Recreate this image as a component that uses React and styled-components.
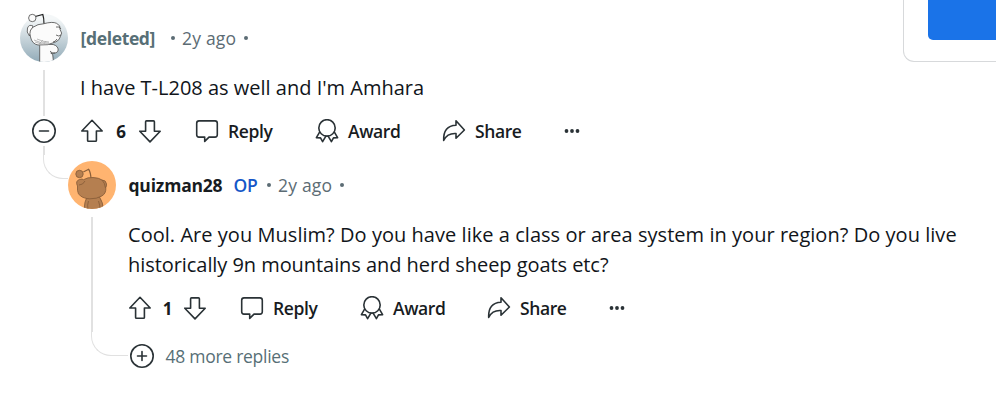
import React from 'react';
import styled, { createGlobalStyle } from 'styled-components';

const GlobalStyle = createGlobalStyle`
  * {
    box-sizing: border-box;
  }
  body {
    margin: 0;
    background: #ffffff;
    font-family: "Open Sans", "Noto Sans", sans-serif;
    overflow: hidden;
  }
`;

const Page = styled.div`
  display: flex;
  width: 996px;
  height: 404px;
  overflow: hidden;
`;

const Thread = styled.main`
  width: 903px;
  flex: none;
  padding: 14px 0 0 20px;
`;

const SidePanel = styled.aside`
  width: 93px;
  height: 62px;
  padding-left: 24px;
  border-left: 1px solid #d7d9db;
  border-bottom: 1px solid #d7d9db;
  border-bottom-left-radius: 11px;
`;

const PanelButton = styled.div`
  height: 40px;
  background: #1a73e8;
  border-bottom-left-radius: 5px;
`;

const Row = styled.div`
  display: flex;
`;

const Header = styled.header`
  display: flex;
  align-items: center;
  height: 48px;
`;

const Rail = styled.div`
  display: flex;
  flex: none;
  flex-direction: column;
  align-items: center;
  width: 48px;
  padding-top: ${(props) => props.$top || 0}px;
`;

const Line = styled.div`
  width: 2px;
  background: #e1e1e1;
  ${(props) => (props.$height ? `height: ${props.$height}px;` : 'flex: 1;')}
`;

const Elbow = styled.div`
  flex: none;
  align-self: flex-start;
  width: ${(props) => props.$width}px;
  height: ${(props) => props.$height}px;
  margin-left: 23px;
  border-left: 1px solid #e1e1e1;
  border-bottom: 1px solid #e1e1e1;
  border-bottom-left-radius: ${(props) => props.$radius}px;
`;

const ToggleSlot = styled.div`
  padding: 3px 0;
`;

const Replies = styled.section`
  padding-top: 6px;
`;

const Content = styled.div`
  padding-left: 12px;
`;

const Body = styled.p`
  margin: 11px 0 4px;
  font-size: 20px;
  line-height: 30px;
  white-space: nowrap;
  color: #11151a;
`;

const BodyLine = styled.span`
  display: block;
  letter-spacing: ${(props) => props.$spacing}px;
`;

const Name = styled.span`
  width: ${(props) => props.$width}px;
  margin-left: 12.5px;
  font-size: 17.5px;
  font-weight: 700;
  letter-spacing: ${(props) => props.$spacing}px;
  color: ${(props) => props.$color};
`;

const OpTag = styled.span`
  width: 33px;
  font-size: 17.5px;
  font-weight: 600;
  letter-spacing: -0.2px;
  color: #1557c8;
`;

const Dot = styled.span`
  width: 4px;
  height: 4px;
  border-radius: 50%;
  background: #5c6c74;
`;

const Time = styled.span`
  width: 61.5px;
  margin-left: 7.5px;
  font-size: 17.5px;
  letter-spacing: 0.2px;
  color: #5c6c74;
`;

const Actions = styled.div`
  display: flex;
  align-items: center;
  height: 48px;
`;

const Count = styled.span`
  width: ${(props) => props.$width}px;
  text-align: center;
  font-size: 17px;
  font-weight: 700;
  color: #181c1f;
`;

const Action = styled.div`
  display: flex;
  align-items: center;
  gap: 9px;
  width: ${(props) => props.$width}px;
  font-size: 17.5px;
  font-weight: 600;
  letter-spacing: -0.4px;
  color: #181c1f;
`;

const Spacer = styled.div`
  width: 33px;
`;

const MoreReplies = styled.div`
  display: flex;
  align-items: center;
  gap: 11.5px;
  height: 48px;
  margin-left: 2px;
  font-size: 17.5px;
  letter-spacing: -0.27px;
  color: #576f76;
`;

const Glyph = styled.svg`
  display: block;
  flex: none;
  width: 24px;
  height: 24px;
  fill: none;
  stroke: #2a3236;
  stroke-width: 1.6;
  stroke-linejoin: round;
  stroke-linecap: round;
`;

const Avatar = styled.svg`
  display: block;
  flex: none;
  width: 48px;
  height: 48px;
  overflow: visible;
`;

const UpIcon = () => (
  <Glyph viewBox="0 0 24 24">
    <path d="M12 1.3 1.8 12h5.8v9.4q0 .9.9.9h7q.9 0 .9-.9V12h5.8z" />
  </Glyph>
);

const DownIcon = () => (
  <Glyph viewBox="0 0 24 24">
    <path d="M12 22.9 1.8 12.2h5.8V2.8q0-.9.9-.9h7q.9 0 .9.9v9.4h5.8z" />
  </Glyph>
);

const ReplyIcon = () => (
  <Glyph viewBox="0 0 24 24">
    <path d="M4 1.9h16q2.3 0 2.3 2.3v11.6q0 2.3-2.3 2.3h-6l-4.3 4.3v-4.3H4q-2.3 0-2.3-2.3V4.2Q1.7 1.900 4 1.900z" />
  </Glyph>
);

const AwardIcon = () => (
  <Glyph viewBox="0 0 24 24">
    <circle cx="12" cy="8.9" r="8.2" />
    <path d="M4.6 13.2 1.4 18.7l4.1.2 2.1 3.8 3.3-5.6M19.4 13.2l3.2 5.5-4.1.2-2.1 3.8-3.3-5.6" />
  </Glyph>
);

const ShareIcon = () => (
  <Glyph viewBox="0 0 24 24">
    <path d="M14 1.7 22.4 11 14 19.2v-4.6C7.6 14.2 4.2 16.3 1.7 21.5 1.2 11.5 5.6 6.4 14 6.2z" />
  </Glyph>
);

const MoreIcon = () => (
  <Glyph viewBox="0 0 24 24">
    <g fill="#2a3236" stroke="none">
      <circle cx="6.5" cy="12" r="1.9" />
      <circle cx="12" cy="12" r="1.9" />
      <circle cx="17.5" cy="12" r="1.9" />
    </g>
  </Glyph>
);

const ToggleIcon = ({ plus }) => (
  <Glyph viewBox="0 0 24 24">
    <circle cx="12" cy="12" r="11.2" />
    <path d={plus ? 'M7.5 12h9M12 7.5v9' : 'M7.5 12h9'} />
  </Glyph>
);

const SketchAvatar = () => (
  <Avatar viewBox="0 0 48 48">
    <defs>
      <linearGradient id="sky" x1="0" y1="0" x2="0" y2="1">
        <stop offset="0.1" stopColor="#f4f7f8" />
        <stop offset="1" stopColor="#92abb8" />
      </linearGradient>
      <clipPath id="sketchClip">
        <path d="M0-5h48v29a24 24 0 0 1-48 0z" />
      </clipPath>
    </defs>
    <circle cx="24" cy="24" r="24" fill="url(#sky)" />
    <g clipPath="url(#sketchClip)" fill="#fbfbfb" stroke="#4a4a4a" strokeWidth="0.8">
      <path d="M13 12q-4-2-5.500 2t2 8z" />
      <path d="M19.700 30v20h14l-1-9.500-2-1.500q7 1 7.500-3 0-4-5-5.500z" />
      <path d="M24 10q0-6-1.200-9.500L15.300 2.500" fill="none" stroke="#222" strokeWidth="1.200" />
      <circle cx="12.300" cy="4" r="3.700" />
      <path d="M10.500 23q-2-7 3-10 4-3 10-3.200 9-2.500 13-.5 4.500 2 3.500 6 3 4 .5 7-1 4-4.500 5.500-8 4.200-18 3.200-6-1-7.500-8z" />
      <path d="M36 13q4-1 5 2M36 21q3 2 5 0M33 28q2 0 4-3M30 37q2 3 5 2" fill="none" />
      <path d="M14 26q7 4 15 3M15 28q7 3 14 2M17 25q6 3 12 3M19 30l4-4M23 31l3-4" fill="none" stroke="#aaaaaa" />
    </g>
  </Avatar>
);

const SnooAvatar = () => (
  <Avatar viewBox="0 0 48 48">
    <defs>
      <clipPath id="snooClip">
        <circle cx="24" cy="24" r="24" />
      </clipPath>
    </defs>
    <circle cx="24" cy="24" r="24" fill="#ffb470" />
    <g clipPath="url(#snooClip)" fill="#b57f50" stroke="#8a5f3a" strokeWidth="0.9">
      <path d="M16 49q.5-9 3-13h12.500q3.500 5 4 13z" />
      <path d="M20 49q-1-5 .5-9M32 49q0-5-1.500-9" fill="none" />
      <path d="M23 17q-.5-6-2.300-8.700L15.300 11" fill="none" strokeWidth="1.200" />
      <circle cx="11.500" cy="13" r="3.700" />
      <path d="M9.500 25q-2.500-5 2-6.500 3-1 4 .2 4-2.500 9.500-2.200 6 .3 9 2.500 4 0 4.500 4 .2 2-.7 3.500.5 6-4 8.500-5 3-12 2.800-8-.3-11.300-5Q9 30 9.500 25z" />
      <path d="M11 24q4 0 6-4M34 19q3 3 3.500 8" fill="none" />
    </g>
  </Avatar>
);

function CommentActions({ score, countWidth }) {
  return (
    <Actions>
      <UpIcon />
      <Count $width={countWidth}>{score}</Count>
      <DownIcon />
      <Spacer />
      <Action $width={120}><ReplyIcon />Reply</Action>
      <Action $width={127}><AwardIcon />Award</Action>
      <Action $width={118}><ShareIcon />Share</Action>
      <MoreIcon />
    </Actions>
  );
}

function App() {
  return (
    <>
      <GlobalStyle />
      <Page>
        <Thread>
          <Header>
            <SketchAvatar />
            <Name $width={90} $spacing={-0.35} $color="#576f76">[deleted]</Name>
            <Dot />
            <Time>2y ago</Time>
            <Dot />
          </Header>
          <Row>
            <Rail $top={8}>
              <Line $height={46} />
              <ToggleSlot><ToggleIcon /></ToggleSlot>
              <Line />
            </Rail>
            <Content>
              <Body>
                <BodyLine $spacing={0}>I have T-L208 as well and I'm Amhara</BodyLine>
              </Body>
              <CommentActions score="6" countWidth={34} />
            </Content>
          </Row>
          <Row>
            <Rail>
              <Elbow $width={25} $height={24} $radius={20} />
            </Rail>
            <Replies>
              <Header>
                <SnooAvatar />
                <Name $width={105} $spacing={-0.2} $color="#181c1f">quizman28</Name>
                <OpTag>OP</OpTag>
                <Dot />
                <Time>2y ago</Time>
                <Dot />
              </Header>
              <Row>
                <Rail $top={8}>
                  <Line />
                </Rail>
                <Content>
                  <Body>
                    <BodyLine $spacing={0.04}>
                      Cool. Are you Muslim? Do you have like a class or area system in your region? Do you live
                    </BodyLine>
                    <BodyLine $spacing={-0.06}>
                      historically 9n mountains and herd sheep goats etc?
                    </BodyLine>
                  </Body>
                  <CommentActions score="1" countWidth={31} />
                </Content>
              </Row>
              <Row>
                <Elbow $width={37} $height={24} $radius={20} />
                <MoreReplies>
                  <ToggleIcon plus />
                  48 more replies
                </MoreReplies>
              </Row>
            </Replies>
          </Row>
        </Thread>
        <SidePanel>
          <PanelButton />
        </SidePanel>
      </Page>
    </>
  );
}

export default App;
